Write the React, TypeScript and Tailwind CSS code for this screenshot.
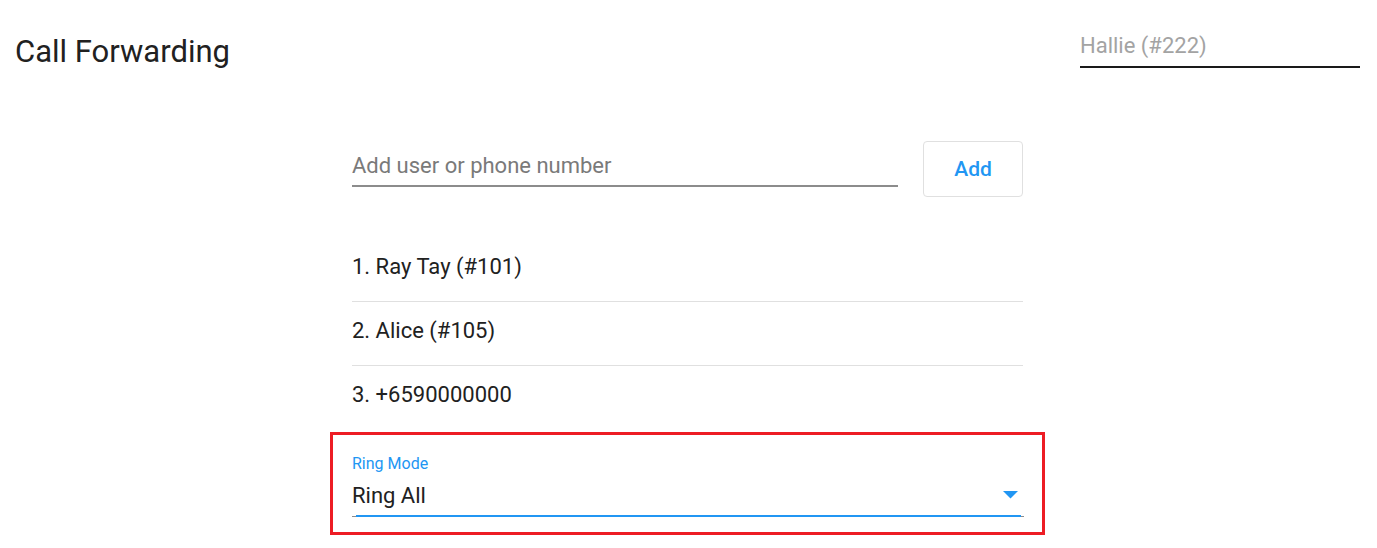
import { useState } from "react";

const forwardList = ["1. Ray Tay (#101)", "2. Alice (#105)", "3. +6590000000"];

function ArrowDrop() {
  return (
    <svg width="15" height="8" viewBox="0 0 15 8" className="block">
      <polygon points="0,0 15,0 7.5,7.5" fill="#2196f3" />
    </svg>
  );
}

export default function App() {
  const [entry, setEntry] = useState("");

  return (
    <div className="w-full h-[548px] bg-white overflow-hidden font-['Roboto','Liberation_Sans',sans-serif]">
      {/* Header */}
      <div className="flex items-start justify-between pt-[32px] pl-[15px] pr-[17px]">
        <h1 className="mt-[2px] text-[31px] leading-[36px] text-[#212121] font-normal">Call Forwarding</h1>
        <div className="w-[280px] border-b-2 border-[#1a1a1a] pb-[6px] text-[22px] leading-[28px] text-[#a3a3a3]">
          Hallie (#222)
        </div>
      </div>

      <div className="ml-[352px] w-[671px]">
        {/* Add entry */}
        <div className="flex items-start mt-[71px]">
          <div className="w-[547px] mt-[11px] border-b-2 border-[#8c8c8c] pb-[5px]">
            <input
              value={entry}
              onChange={(e) => setEntry(e.target.value)}
              placeholder="Add user or phone number"
              className="w-full text-[22px] leading-[28px] h-[28px] text-[#212121] placeholder:text-[#7a7a7a] outline-none bg-transparent"
            />
          </div>
          <button className="ml-[25px] w-[100px] h-[56px] border border-[#e0e0e0] rounded-[4px] flex items-center justify-center text-[21px] font-medium text-[#2196f3] pt-[2px]">
            Add
          </button>
        </div>

        {/* Forward list */}
        <div className="mt-[41px]">
          {forwardList.map((item, i) => (
            <div
              key={item}
              className={`pt-[15px] pb-[20px] text-[22px] leading-[28px] text-[#212121] ${
                i < forwardList.length - 1 ? "border-b border-[#e0e0e0]" : ""
              }`}
            >
              {item}
            </div>
          ))}
        </div>

        {/* Ring mode select (highlighted) */}
        <div className="mt-[3px] -ml-[22px] w-[715px] border-[3px] border-[#ed1c24] pl-[19px] pr-[18px] pt-[19px] pb-[15px]">
          <div className="text-[16px] leading-[20px] text-[#2196f3]">Ring Mode</div>
          <div className="relative mt-[8px] pb-[5px] text-[22px] leading-[28px] text-[#212121]">
            Ring All
            <div className="absolute right-[6px] top-[9px]">
              <ArrowDrop />
            </div>
          </div>
          <div className="relative h-[2px]">
            <div className="absolute left-0 right-0 top-[1px] h-[1px] bg-[#8c8c8c]" />
            <div className="absolute left-[4px] right-[3px] top-0 h-[2px] bg-[#2196f3]" />
          </div>
        </div>
      </div>
    </div>
  );
}
